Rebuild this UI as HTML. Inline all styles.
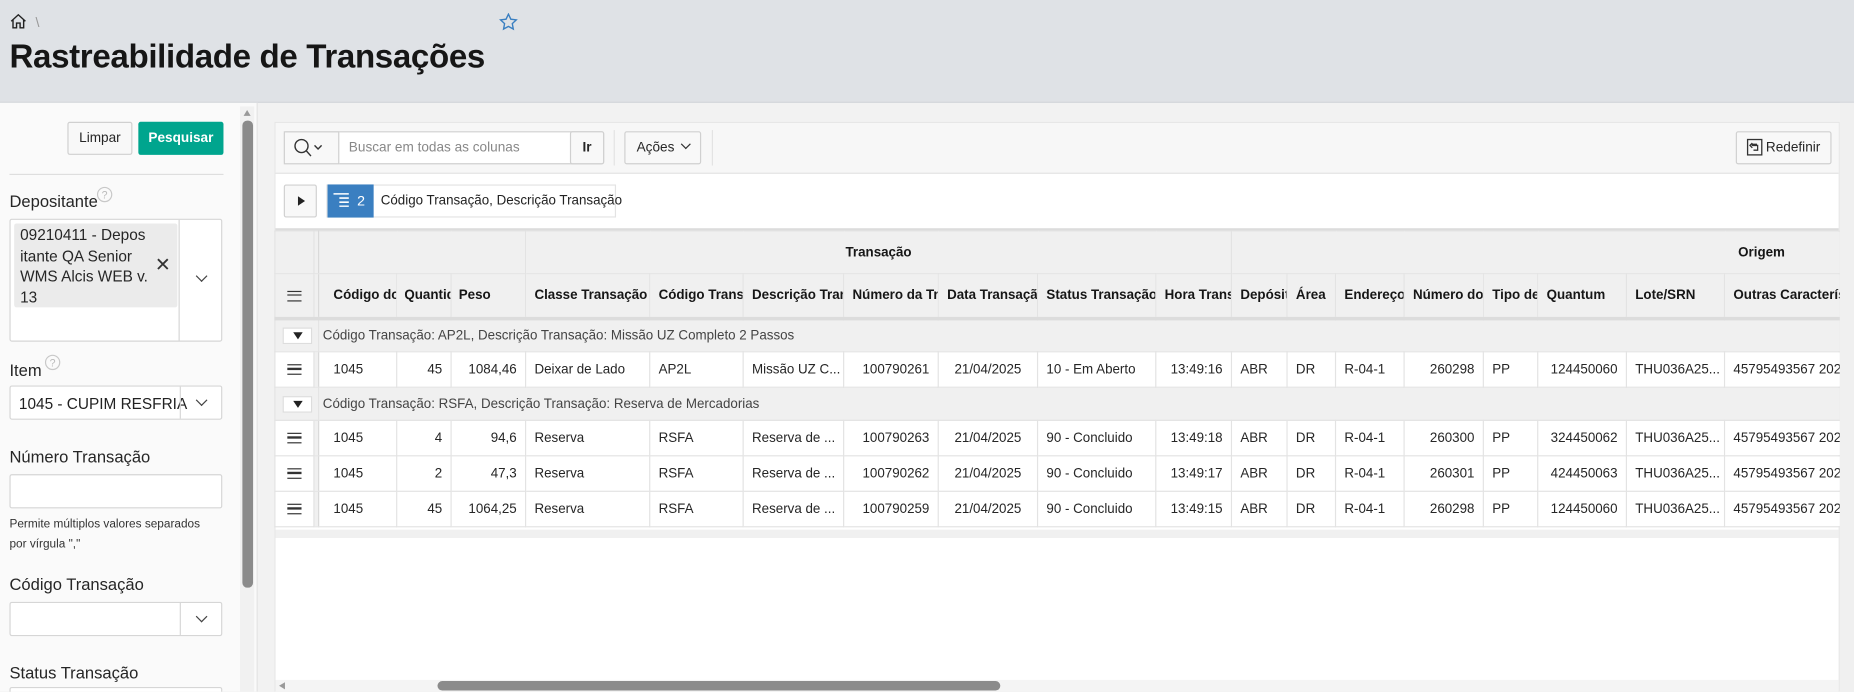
<!DOCTYPE html>
<html><head><meta charset="utf-8"><style>
*{box-sizing:border-box;margin:0;padding:0}
html,body{width:1854px;height:692px;overflow:hidden;background:#f2f2f2}
#w{position:absolute;left:0;top:0;width:1568px;height:585px;overflow:hidden;transform:scale(1.18240);transform-origin:0 0;font-family:"Liberation Sans",sans-serif;color:#262626;font-size:11.5px}
.a{position:absolute}
.hdr{left:0;top:0;width:1568px;height:87px;background:#dfe2e6;border-bottom:1px solid #d4d7db}
.title{left:8px;top:32px;font-size:28px;font-weight:bold;color:#161616;letter-spacing:-0.3px;white-space:nowrap}
.left{left:0;top:87px;width:218px;height:498px;background:#fafafa;border-right:1px solid #e2e2e2}
.btn{border:1px solid #d0d0d0;background:#f8f8f8;border-radius:2px;text-align:center}
.lbl{font-size:14px;color:#262626;white-space:nowrap}
.inp{background:#fff;border:1px solid #d6d6d6;border-radius:2px}
.help{width:13px;height:13px;border:1px solid #c8c8c8;border-radius:50%;font-size:9px;color:#bbb;text-align:center;line-height:12px}
.chev{width:7px;height:7px;border-right:1.3px solid #444;border-bottom:1.3px solid #444;transform:rotate(45deg)}
.reg{left:232px;top:103px;width:1324px;height:482px;background:#fff;border:1px solid #e6e6e6}
table{border-collapse:collapse;table-layout:fixed;position:absolute;left:232px;top:194px;width:1324px}
td,th{border:1px solid #e3e3e3;white-space:nowrap;overflow:hidden;padding:0 7px;font-size:11.3px}
th{background:#f0f0f0;font-weight:bold;text-align:left;color:#161616}
tr.g td{background:#f0f0f0;height:28px;color:#444}
tr.d td{height:30px;background:#fff}
.r{text-align:right}.c{text-align:center}
.sel{background:#f0f0f0 !important;text-align:center;padding:0}
.gap{background:#f0f0f0 !important;padding:0;border-left:1px solid #d8d8d8;border-right:1px solid #d8d8d8}
.ham{display:inline-block;width:12px;height:9px;border-top:1.5px solid #333;border-bottom:1.5px solid #333;position:relative;vertical-align:middle}
.ham:before{content:"";position:absolute;left:0;right:0;top:2.2px;height:1.5px;background:#333}
.tri{display:inline-block;width:25px;height:14px;background:#fff;border:1px solid #ddd;position:relative;vertical-align:middle;margin:0 4px 0 -1px}
.tri:after{content:"";position:absolute;left:8px;top:3px;border-left:4.5px solid transparent;border-right:4.5px solid transparent;border-top:6px solid #222}
</style></head><body><div id="w">
<div class="a hdr"></div>
<svg class="a" style="left:8px;top:11px" width="15" height="14" viewBox="0 0 15 14"><path d="M1.5 7 L7.5 1.5 L13.5 7 M3 5.8 V12.5 H6 V8.5 H9 V12.5 H12 V5.8" fill="none" stroke="#222" stroke-width="1.2"/></svg>
<div class="a" style="left:30px;top:12px;color:#999;font-size:12px">\</div>
<svg class="a" style="left:422px;top:11px" width="16" height="15" viewBox="0 0 24 23"><path d="M12 1.5l3.1 6.5 7.1.9-5.2 4.9 1.3 7-6.3-3.4-6.3 3.4 1.3-7L1.8 8.9l7.1-.9z" fill="none" stroke="#3a7fc1" stroke-width="1.8"/></svg>
<div class="a title">Rastreabilidade de Transações</div>

<div class="a left"></div>
<div class="a" style="left:203px;top:90px;width:12px;height:495px;background:#f1f1f1"></div>
<div class="a" style="left:206px;top:93px;border-left:3.5px solid transparent;border-right:3.5px solid transparent;border-bottom:5px solid #999"></div>
<div class="a" style="left:205px;top:102px;width:9px;height:395px;background:#8b8b8b;border-radius:4px"></div>
<div class="a btn" style="left:57px;top:103px;width:55px;height:28px;line-height:27px;font-size:11.5px">Limpar</div>
<div class="a" style="left:117px;top:103px;width:72px;height:28px;background:#00a58e;color:#fff;font-weight:bold;text-align:center;line-height:28px;border-radius:2px;font-size:11.5px">Pesquisar</div>
<div class="a" style="left:8px;top:147px;width:181px;height:1px;background:#dedede"></div>
<div class="a lbl" style="left:8px;top:162px">Depositante</div>
<div class="a help" style="left:82px;top:158px">?</div>
<div class="a inp" style="left:8px;top:185px;width:180px;height:104px"></div>
<div class="a" style="left:12px;top:189px;width:138px;height:71px;background:#ebebeb;border-radius:2px"></div>
<div class="a" style="left:17px;top:190px;font-size:13px;line-height:17.5px;color:#262626">09210411 - Depos<br>itante QA Senior<br>WMS Alcis WEB v.<br>13</div>
<div class="a" style="left:131px;top:214px;font-size:16px;color:#333">✕</div>
<div class="a" style="left:151px;top:186px;width:1px;height:102px;background:#d6d6d6"></div>
<div class="a chev" style="left:167px;top:230px"></div>
<div class="a lbl" style="left:8px;top:305px">Item</div>
<div class="a help" style="left:38px;top:300px">?</div>
<div class="a inp" style="left:8px;top:326px;width:180px;height:29px"></div>
<div class="a" style="left:16px;top:334px;font-size:13px;color:#222">1045 - CUPIM RESFRIA</div>
<div class="a" style="left:152px;top:327px;width:1px;height:27px;background:#d6d6d6"></div>
<div class="a chev" style="left:167px;top:335px"></div>
<div class="a lbl" style="left:8px;top:378px">Número Transação</div>
<div class="a inp" style="left:8px;top:401px;width:180px;height:29px"></div>
<div class="a" style="left:8px;top:435px;font-size:10px;line-height:17px;color:#333">Permite múltiplos valores separados<br>por vírgula ","</div>
<div class="a lbl" style="left:8px;top:486px">Código Transação</div>
<div class="a inp" style="left:8px;top:509px;width:180px;height:29px"></div>
<div class="a" style="left:152px;top:510px;width:1px;height:27px;background:#d6d6d6"></div>
<div class="a chev" style="left:167px;top:518px"></div>
<div class="a lbl" style="left:8px;top:561px">Status Transação</div>
<div class="a inp" style="left:8px;top:581px;width:180px;height:29px"></div>

<div class="a reg"></div>
<div class="a" style="left:233px;top:104px;width:1322px;height:43px;background:#f7f7f7;border-bottom:1px solid #e3e3e3"></div>
<div class="a btn" style="left:240px;top:111px;width:271px;height:28px;background:#fff"></div>
<div class="a" style="left:240px;top:111px;width:47px;height:28px;background:#f8f8f8;border:1px solid #d0d0d0"></div>
<svg class="a" style="left:248px;top:117px" width="28" height="16" viewBox="0 0 28 16"><circle cx="7" cy="6.5" r="5.5" fill="none" stroke="#333" stroke-width="1.2"/><path d="M11 10.5l4 4.5M18 6l3 3 3-3" fill="none" stroke="#333" stroke-width="1.2"/></svg>
<div class="a" style="left:295px;top:119px;font-size:11.5px;color:#888">Buscar em todas as colunas</div>
<div class="a btn" style="left:482px;top:111px;width:29px;height:28px;line-height:27px;font-weight:bold;font-size:11.5px">Ir</div>
<div class="a" style="left:519px;top:110px;width:1px;height:30px;background:#e3e3e3"></div>
<div class="a btn" style="left:528px;top:111px;width:65px;height:28px;line-height:27px;font-size:11.5px">Ações <span style="display:inline-block;width:6px;height:6px;border-right:1.2px solid #333;border-bottom:1.2px solid #333;transform:rotate(45deg);margin:0 0 3px 3px"></span></div>
<div class="a" style="left:602px;top:110px;width:1px;height:30px;background:#e3e3e3"></div>
<div class="a btn" style="left:1468px;top:111px;width:81px;height:28px;line-height:27px;font-size:11.5px;padding-left:16px">Redefinir</div>
<svg class="a" style="left:1477px;top:117px" width="14" height="15" viewBox="0 0 14 15"><rect x="1" y="1" width="12" height="13" fill="none" stroke="#333" stroke-width="1.1"/><path d="M9 5H5v1.5M5 4l-2 2 2 2M5 6h4.5v4H6" fill="none" stroke="#333" stroke-width="1.1"/></svg>

<div class="a btn" style="left:240px;top:156px;width:28px;height:28px;background:#f8f8f8"></div>
<div class="a" style="left:252px;top:166px;border-top:4px solid transparent;border-bottom:4px solid transparent;border-left:6px solid #222"></div>
<div class="a" style="left:276px;top:156px;width:245px;height:28px;border:1px solid #e3e3e3;background:#fff"></div>
<div class="a" style="left:277px;top:156px;width:39px;height:28px;background:#3a7fc1"></div>
<svg class="a" style="left:282px;top:163px" width="14" height="12" viewBox="0 0 14 12"><path d="M0 1h13M5 4.5h8M5 8h8M5 11.5h8" stroke="#fff" stroke-width="1.3"/></svg>
<div class="a" style="left:302px;top:163px;color:#fff;font-size:12px">2</div>
<div class="a" style="left:322px;top:164px;font-size:11.3px;color:#222">Código Transação, Descrição Transação</div>
<div class="a" style="left:233px;top:193px;width:1322px;height:2px;background:#dcdcdc"></div>

<table style="top:195px">
<colgroup><col style="width:33px"><col style="width:4px"><col style="width:66px"><col style="width:46px"><col style="width:63px"><col style="width:105px"><col style="width:79px"><col style="width:85px"><col style="width:80px"><col style="width:84px"><col style="width:100px"><col style="width:64px"><col style="width:47px"><col style="width:41px"><col style="width:58px"><col style="width:67px"><col style="width:46px"><col style="width:75px"><col style="width:83px"><col style="width:98px"></colgroup>
<tr style="height:36px"><th class="sel"></th><th class="gap"></th><th colspan="3"></th><th colspan="7" class="c">Transação</th><th colspan="8" style="padding-left:428px">Origem</th></tr>
<tr style="height:38px;border-bottom:3px solid #dcdcdc"><th class="sel"><span class="ham"></span></th><th class="gap"></th><th style="padding-left:12px">Código do</th><th style="padding-left:6px">Quantidade</th><th style="padding-left:6px">Peso</th><th>Classe Transação</th><th>Código Transação</th><th>Descrição Transação</th><th>Número da Transação</th><th>Data Transação</th><th>Status Transação...</th><th>Hora Transação</th><th>Depósito</th><th>Área</th><th>Endereço...</th><th>Número do</th><th>Tipo de</th><th>Quantum</th><th>Lote/SRN</th><th>Outras Características</th></tr>
<tr class="g"><td class="sel" colspan="2" style="text-align:left;padding-left:7px"><span class="tri"></span></td><td colspan="18" style="padding-left:3px">Código Transação: AP2L, Descrição Transação: Missão UZ Completo 2 Passos</td></tr>
<tr class="d"><td class="c" style="padding:0"><span class="ham"></span></td><td class="gap"></td><td style="padding-left:12px">1045</td><td class="r">45</td><td class="r">1084,46</td><td>Deixar de Lado</td><td>AP2L</td><td>Missão UZ C...</td><td class="r">100790261</td><td class="c">21/04/2025</td><td>10 - Em Aberto</td><td class="r">13:49:16</td><td>ABR</td><td>DR</td><td>R-04-1</td><td class="r">260298</td><td>PP</td><td class="r">124450060</td><td>THU036A25...</td><td>45795493567 2025</td></tr>
<tr class="g"><td class="sel" colspan="2" style="text-align:left;padding-left:7px"><span class="tri"></span></td><td colspan="18" style="padding-left:3px">Código Transação: RSFA, Descrição Transação: Reserva de Mercadorias</td></tr>
<tr class="d"><td class="c" style="padding:0"><span class="ham"></span></td><td class="gap"></td><td style="padding-left:12px">1045</td><td class="r">4</td><td class="r">94,6</td><td>Reserva</td><td>RSFA</td><td>Reserva de ...</td><td class="r">100790263</td><td class="c">21/04/2025</td><td>90 - Concluido</td><td class="r">13:49:18</td><td>ABR</td><td>DR</td><td>R-04-1</td><td class="r">260300</td><td>PP</td><td class="r">324450062</td><td>THU036A25...</td><td>45795493567 2025</td></tr>
<tr class="d"><td class="c" style="padding:0"><span class="ham"></span></td><td class="gap"></td><td style="padding-left:12px">1045</td><td class="r">2</td><td class="r">47,3</td><td>Reserva</td><td>RSFA</td><td>Reserva de ...</td><td class="r">100790262</td><td class="c">21/04/2025</td><td>90 - Concluido</td><td class="r">13:49:17</td><td>ABR</td><td>DR</td><td>R-04-1</td><td class="r">260301</td><td>PP</td><td class="r">424450063</td><td>THU036A25...</td><td>45795493567 2025</td></tr>
<tr class="d"><td class="c" style="padding:0"><span class="ham"></span></td><td class="gap"></td><td style="padding-left:12px">1045</td><td class="r">45</td><td class="r">1064,25</td><td>Reserva</td><td>RSFA</td><td>Reserva de ...</td><td class="r">100790259</td><td class="c">21/04/2025</td><td>90 - Concluido</td><td class="r">13:49:15</td><td>ABR</td><td>DR</td><td>R-04-1</td><td class="r">260298</td><td>PP</td><td class="r">124450060</td><td>THU036A25...</td><td>45795493567 2025</td></tr>
</table>
<div class="a" style="left:233px;top:448px;width:1322px;height:7px;background:#f0f0f0"></div>
<div class="a" style="left:233px;top:575px;width:1322px;height:10px;background:#f4f4f4"></div>
<div class="a" style="left:236px;top:577px;border-top:3.5px solid transparent;border-bottom:3.5px solid transparent;border-right:5px solid #999"></div>
<div class="a" style="left:370px;top:576px;width:476px;height:8px;background:#8b8b8b;border-radius:4px"></div>
<div class="a" style="left:1556px;top:87px;width:12px;height:498px;background:#f0f0f0"></div>
</div></body></html>
